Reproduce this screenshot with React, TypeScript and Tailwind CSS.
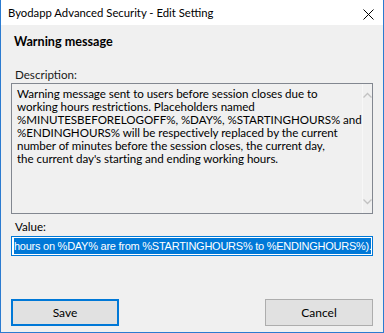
import React from "react";

const descLines = [
  "Warning message sent to users before session closes due to",
  "working hours restrictions. Placeholders named",
  "%MINUTESBEFORELOGOFF%, %DAY%, %STARTINGHOURS% and",
  "%ENDINGHOURS% will be respectively replaced by the current",
  "number of minutes before the session closes, the current day,",
  "the current day's starting and ending working hours.",
];

function Chevron({ up }: { up?: boolean }) {
  return (
    <svg width="9" height="6" viewBox="0 0 9 6" fill="none">
      <path
        d={up ? "M0.5 5.5 L4.5 1.5 L8.5 5.5" : "M0.5 0.5 L4.5 4.5 L8.5 0.5"}
        stroke="#c2c2c2"
        strokeWidth="1.3"
      />
    </svg>
  );
}

export default function App() {
  return (
    <div className="w-[384px] h-[333px] flex flex-col border-x border-b border-[#2b7bd0] bg-[#f0f0f0] font-['Lato',sans-serif] text-[12px] text-black overflow-hidden">
      {/* Title bar */}
      <div className="h-[25px] shrink-0 bg-white flex items-center justify-between pl-[7px] pr-[9px]">
        <span className="leading-none text-[11.3px]">Byodapp Advanced Security - Edit Setting</span>
        <svg className="mt-[3px]" width="11" height="11" viewBox="0 0 11 11">
          <path d="M0.5 0.5 L10.5 10.5 M10.5 0.5 L0.5 10.5" stroke="#000" strokeWidth="1" />
        </svg>
      </div>

      <div className="flex-1 flex flex-col px-[10px]">
        <div className="mt-[9px] pl-[3px] font-bold text-[12.6px] leading-[16px]">Warning message</div>

        <div className="mt-[18px] pl-[4px] leading-[14px] text-[11.6px] text-[#1a1a1a]">Description:</div>

        <div className="mt-[1px] h-[131px] flex border border-[#828790]">
          <div className="flex-1 pl-[5px] pt-[3px] leading-[13px] text-[11.6px] tracking-[-0.05px]">
            {descLines.map((l) => (
              <div key={l} className="whitespace-nowrap">
                {l}
              </div>
            ))}
          </div>
          <div className="w-[18px] flex flex-col items-center justify-between py-[8px] border-l border-[#f7f7f7]">
            <Chevron up />
            <Chevron />
          </div>
        </div>

        <div className="mt-[6px] pl-[4px] leading-[14px] text-[11.6px]">Value:</div>

        <div className="mt-[2px] h-[20px] border border-[#0078d7] bg-white pl-[2px] pr-[1px] py-[1px] flex">
          <div className="flex-1 bg-[#0078d7] text-white font-['Liberation_Sans',sans-serif] text-[11px] tracking-[-0.25px] leading-[16px] whitespace-nowrap overflow-hidden">
            hours on %DAY% are from %STARTINGHOURS% to %ENDINGHOURS%).
          </div>
        </div>

        <div className="mt-[43px] flex justify-between">
          <button className="w-[108px] h-[27px] border-2 border-[#0078d7] bg-[#e1e1e1] text-[12px]">Save</button>
          <button className="w-[108px] h-[27px] border border-[#adadad] bg-[#e1e1e1] text-[12px]">Cancel</button>
        </div>
      </div>
    </div>
  );
}
